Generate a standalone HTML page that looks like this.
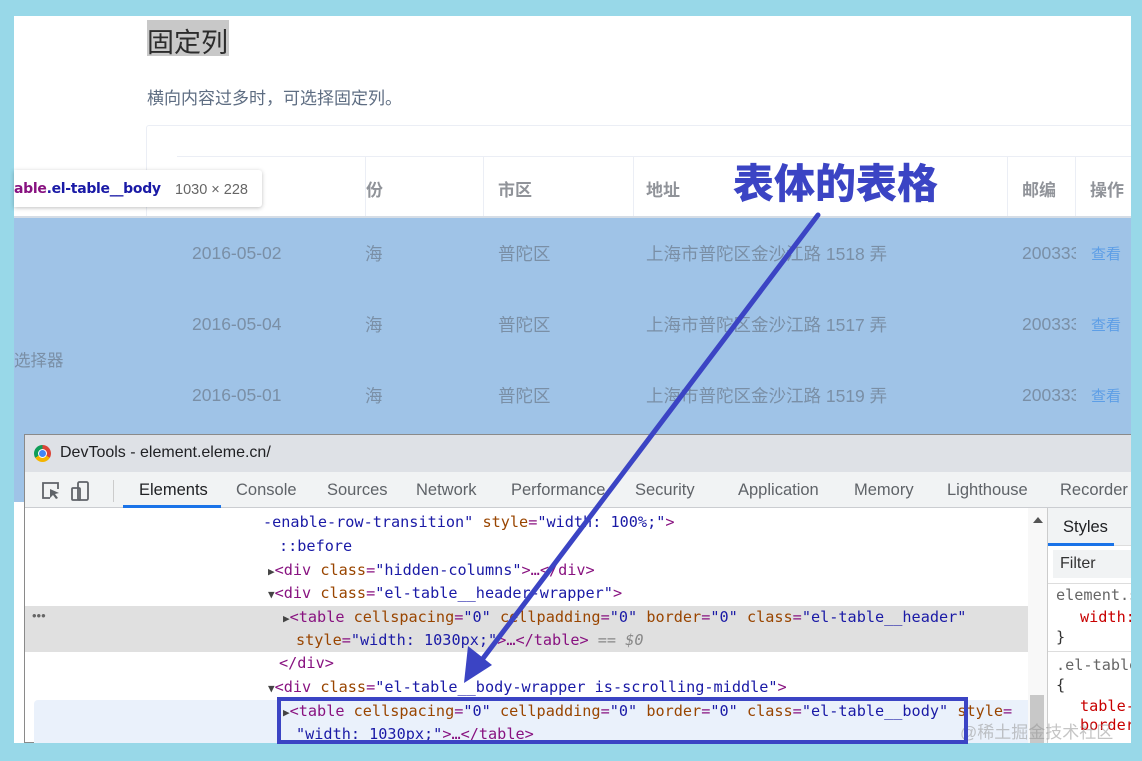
<!DOCTYPE html>
<html><head><meta charset="utf-8">
<style>
*{margin:0;padding:0;box-sizing:border-box}
body{width:1142px;height:761px;background:#98d8e8;position:relative;overflow:hidden;font-family:"Liberation Sans","Noto Sans CJK SC",sans-serif}
.abs{position:absolute}
#clip{position:absolute;left:0;top:0;width:1131px;height:761px;overflow:hidden}
.mono{font-family:"DejaVu Sans Mono","Liberation Mono",monospace;font-size:15.2px;white-space:pre;color:#881280}
.an{color:#994500}.av{color:#1a1aa6}
.hd{font-weight:bold;color:#909399;font-size:17px}
.cell{color:#7a8fa6;font-size:17.5px}
.tab{position:absolute;top:481px;font-size:16.5px;color:#5f6368;font-family:"Liberation Sans",sans-serif}
</style></head><body>
<div id="clip">
<div class="abs" style="left:14px;top:16px;width:1117px;height:727px;background:#fff"></div>
<div class="abs" style="left:147px;top:20px;width:82px;height:36px;background:#c8c8c8"></div>
<div class="abs" style="left:147px;top:21px;font-size:27px;color:#2c2c2c">固定列</div>
<div class="abs" style="left:147px;top:84px;font-size:17px;color:#5e6d82">横向内容过多时，可选择固定列。</div>
<div class="abs" style="left:146px;top:125px;width:1000px;height:320px;border:1px solid #ebeef5;border-radius:3px"></div>
<div class="abs" style="left:177px;top:156px;width:970px;height:62px;border-top:1px solid #ebeef5;background:#fff"></div>
<div class="abs" style="left:365px;top:156px;width:1px;height:62px;background:#ebeef5"></div>
<div class="abs" style="left:483px;top:156px;width:1px;height:62px;background:#ebeef5"></div>
<div class="abs" style="left:633px;top:156px;width:1px;height:62px;background:#ebeef5"></div>
<div class="abs" style="left:1007px;top:156px;width:1px;height:62px;background:#ebeef5"></div>
<div class="abs" style="left:1075px;top:156px;width:1px;height:62px;background:#ebeef5"></div>
<div class="abs hd" style="left:366px;top:176px">份</div>
<div class="abs hd" style="left:498px;top:176px">市区</div>
<div class="abs hd" style="left:646px;top:176px">地址</div>
<div class="abs hd" style="left:1022px;top:176px">邮编</div>
<div class="abs hd" style="left:1090px;top:176px">操作</div>
<div class="abs" style="left:14px;top:218px;width:1117px;height:284px;background:#9fc3e7"></div>
<div class="abs" style="left:14px;top:216px;width:1117px;height:2px;background:#d5dde6"></div>
<div class="abs cell" style="left:192px;top:243px">2016-05-02</div>
<div class="abs cell" style="left:192px;top:314px">2016-05-04</div>
<div class="abs cell" style="left:192px;top:385px">2016-05-01</div>
<div class="abs cell" style="left:365px;top:241px">海</div>
<div class="abs cell" style="left:365px;top:312px">海</div>
<div class="abs cell" style="left:365px;top:383px">海</div>
<div class="abs cell" style="left:498px;top:241px">普陀区</div>
<div class="abs cell" style="left:498px;top:312px">普陀区</div>
<div class="abs cell" style="left:498px;top:383px">普陀区</div>
<div class="abs cell" style="left:646px;top:241px">上海市普陀区金沙江路 1518 弄</div>
<div class="abs cell" style="left:646px;top:312px">上海市普陀区金沙江路 1517 弄</div>
<div class="abs cell" style="left:646px;top:383px">上海市普陀区金沙江路 1519 弄</div>
<div class="abs cell" style="left:1022px;top:243px;width:54px;overflow:hidden">200333</div>
<div class="abs cell" style="left:1022px;top:314px;width:54px;overflow:hidden">200333</div>
<div class="abs cell" style="left:1022px;top:385px;width:54px;overflow:hidden">200333</div>
<div class="abs" style="left:1091px;top:243px;font-size:15px;color:#5d9ee6">查看</div>
<div class="abs" style="left:1091px;top:314px;font-size:15px;color:#5d9ee6">查看</div>
<div class="abs" style="left:1091px;top:385px;font-size:15px;color:#5d9ee6">查看</div>
<div class="abs" style="left:14px;top:347px;font-size:16.5px;color:#7a8fa6">选择器</div>
<div class="abs" style="left:14px;top:170px;width:248px;height:37px;background:#fff;border-radius:0 3px 3px 0;box-shadow:0 1px 4px rgba(0,0,0,.25)"></div>
<div class="abs" style="left:14px;top:181px;font-size:14px;font-weight:bold;color:#881280;font-family:'DejaVu Sans',sans-serif;letter-spacing:-.3px">able<span style="color:#1a1aa6">.el-table__body</span></div>
<div class="abs" style="left:175px;top:182px;font-size:14.5px;color:#666">1030 × 228</div>
<div class="abs" style="left:24px;top:434px;width:1107px;height:309px;background:#fff;border:1px solid #8a8a8a;border-right:none"></div>
<div class="abs" style="left:25px;top:435px;width:1106px;height:37px;background:#dee1e6"></div>
<div class="abs" style="left:34px;top:445px;width:17px;height:17px;border-radius:50%;background:conic-gradient(#db4437 0 120deg,#f4b400 120deg 240deg,#0f9d58 240deg 360deg)"></div>
<div class="abs" style="left:38px;top:449px;width:9px;height:9px;border-radius:50%;background:#4285f4;border:1.5px solid #fff"></div>
<div class="abs" style="left:60px;top:444px;font-size:16px;color:#202124">DevTools - element.eleme.cn/</div>
<div class="abs" style="left:25px;top:472px;width:1106px;height:36px;background:#f1f3f4;border-bottom:1px solid #cbcdd1"></div>
<svg class="abs" style="left:40px;top:480px" width="60" height="22"><path d="M10 18H3V3h15v6" fill="none" stroke="#5f6368" stroke-width="1.8"/><path d="M10 9l9 4-4 1 3 4-2 1-3-4-3 3z" fill="#5f6368"/><rect x="38" y="2" width="10" height="18" rx="1.5" fill="none" stroke="#5f6368" stroke-width="1.8"/><rect x="32" y="8" width="8" height="12" rx="1" fill="none" stroke="#5f6368" stroke-width="1.8"/></svg>
<div class="abs" style="left:113px;top:480px;width:1px;height:22px;background:#ccc"></div>
<div class="tab" style="left:139px;color:#202124">Elements</div>
<div class="abs" style="left:123px;top:505px;width:98px;height:3px;background:#1a73e8"></div>
<div class="tab" style="left:236px">Console</div>
<div class="tab" style="left:327px">Sources</div>
<div class="tab" style="left:416px">Network</div>
<div class="tab" style="left:511px">Performance</div>
<div class="tab" style="left:635px">Security</div>
<div class="tab" style="left:738px">Application</div>
<div class="tab" style="left:854px">Memory</div>
<div class="tab" style="left:947px">Lighthouse</div>
<div class="tab" style="left:1060px">Recorder</div>
<div class="abs" style="left:25px;top:606px;width:1003px;height:46px;background:#e0e0e0"></div>
<div class="abs" style="left:34px;top:700px;width:994px;height:43px;background:#eaf1fb;border-radius:4px 0 0 0"></div>
<div class="abs" style="left:32px;top:608px;font-size:13px;color:#666">•••</div>
<div class="abs mono" style="left:263px;top:513px"><span class="av">-enable-row-transition"</span> <span class="an">style</span>=<span class="av">"width: 100%;"</span>&gt;</div>
<div class="abs mono" style="left:279px;top:537px"><span class="av">::before</span></div>
<div class="abs mono" style="left:268px;top:561px"><span style="color:#444;font-size:11px">▶</span>&lt;div <span class="an">class</span>=<span class="av">"hidden-columns"</span>&gt;…&lt;/div&gt;</div>
<div class="abs mono" style="left:268px;top:584px"><span style="color:#444;font-size:11px">▼</span>&lt;div <span class="an">class</span>=<span class="av">"el-table__header-wrapper"</span>&gt;</div>
<div class="abs mono" style="left:283px;top:608px"><span style="color:#444;font-size:11px">▶</span>&lt;table <span class="an">cellspacing</span>=<span class="av">"0"</span> <span class="an">cellpadding</span>=<span class="av">"0"</span> <span class="an">border</span>=<span class="av">"0"</span> <span class="an">class</span>=<span class="av">"el-table__header"</span></div>
<div class="abs mono" style="left:296px;top:631px"><span class="an">style</span>=<span class="av">"width: 1030px;"</span>&gt;…&lt;/table&gt; <span style="color:#888">== <i>$0</i></span></div>
<div class="abs mono" style="left:279px;top:654px">&lt;/div&gt;</div>
<div class="abs mono" style="left:268px;top:678px"><span style="color:#444;font-size:11px">▼</span>&lt;div <span class="an">class</span>=<span class="av">"el-table__body-wrapper is-scrolling-middle"</span>&gt;</div>
<div class="abs mono" style="left:283px;top:702px"><span style="color:#444;font-size:11px">▶</span>&lt;table <span class="an">cellspacing</span>=<span class="av">"0"</span> <span class="an">cellpadding</span>=<span class="av">"0"</span> <span class="an">border</span>=<span class="av">"0"</span> <span class="an">class</span>=<span class="av">"el-table__body"</span> <span class="an">style</span>=</div>
<div class="abs mono" style="left:296px;top:725px"><span class="av">"width: 1030px;"</span>&gt;…&lt;/table&gt;</div>
<div class="abs" style="left:1028px;top:508px;width:19px;height:235px;background:#f8f8f8"></div>
<div class="abs" style="left:1033px;top:517px;width:0;height:0;border:5px solid transparent;border-bottom:6px solid #555;border-top:none"></div>
<div class="abs" style="left:1030px;top:695px;width:14px;height:48px;background:#c8c8c8"></div>
<div class="abs" style="left:1047px;top:508px;width:84px;height:235px;background:#fff;border-left:1px solid #ccc"></div>
<div class="abs" style="left:1048px;top:508px;width:83px;height:38px;background:#f1f3f4;border-bottom:1px solid #ddd"></div>
<div class="abs" style="left:1063px;top:518px;font-size:16.5px;color:#202124">Styles</div>
<div class="abs" style="left:1048px;top:543px;width:66px;height:3px;background:#1a73e8"></div>
<div class="abs" style="left:1053px;top:550px;width:78px;height:28px;background:#f1f3f4"></div>
<div class="abs" style="left:1060px;top:555px;font-size:16px;color:#333">Filter</div>
<div class="abs" style="left:1048px;top:583px;width:83px;height:1px;background:#ddd"></div>
<div class="abs mono" style="left:1056px;top:586px;color:#666">element.s</div>
<div class="abs mono" style="left:1080px;top:608px;color:#c80000">width:</div>
<div class="abs mono" style="left:1056px;top:628px;color:#333">}</div>
<div class="abs" style="left:1048px;top:651px;width:83px;height:1px;background:#ddd"></div>
<div class="abs mono" style="left:1056px;top:656px;color:#666">.el-table</div>
<div class="abs mono" style="left:1056px;top:676px;color:#333">{</div>
<div class="abs mono" style="left:1080px;top:697px;color:#c80000">table-</div>
<div class="abs mono" style="left:1080px;top:716px;color:#c80000">border</div>
<div class="abs" style="left:960px;top:718px;font-size:17px;color:rgba(150,150,150,.55)">@稀土掘金技术社区</div>
<div class="abs" style="left:733px;top:156px;font-size:41px;font-weight:900;color:#3b44c4;font-family:'Noto Sans CJK SC',sans-serif;line-height:1.2">表体的表格</div>
<div class="abs" style="left:277px;top:697px;width:691px;height:47px;border:4px solid #3b44c4"></div>
<svg class="abs" style="left:0;top:0" width="1142" height="761"><line x1="818" y1="215" x2="478" y2="665" stroke="#3b44c4" stroke-width="5" stroke-linecap="round"/><path d="M464 683 L468 646 L492 665 Z" fill="#3b44c4"/></svg>
</div>
</body></html>
